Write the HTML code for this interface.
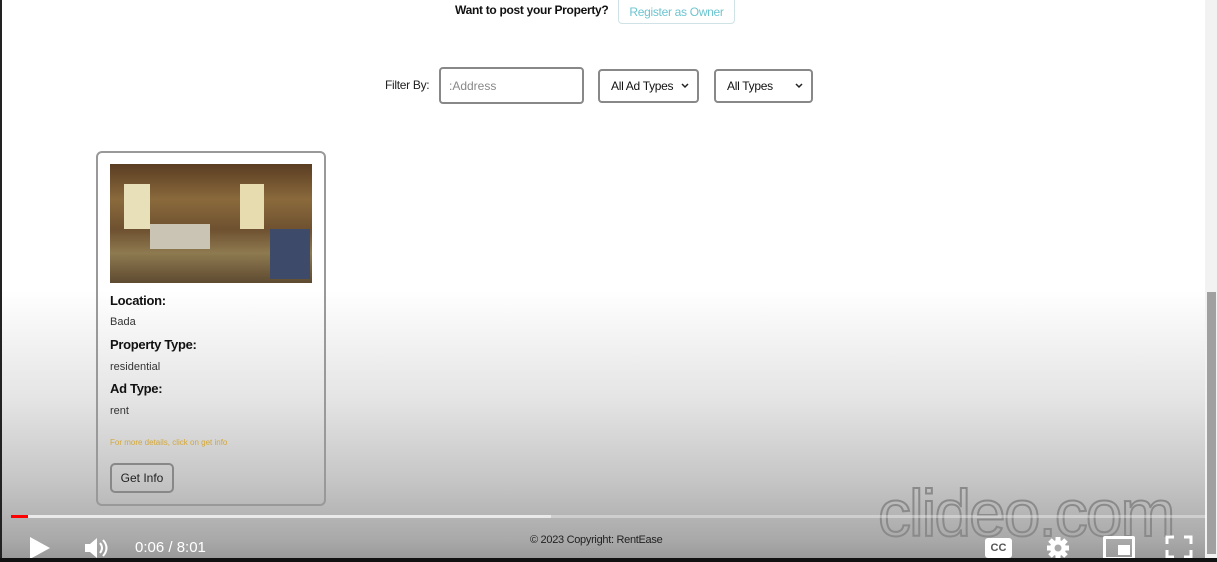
<!DOCTYPE html>
<html><head><meta charset="utf-8"><style>
*{margin:0;padding:0;box-sizing:border-box}
body{width:1217px;height:562px;overflow:hidden;position:relative;font-family:"Liberation Sans",sans-serif;background:linear-gradient(#fff 0,#fff 290px,#e4e4e4 400px,#c6c6c6 480px,#a9a9a9 540px,#9a9a9a 558px);}
.a{position:absolute}
.leftline{left:0;top:0;width:2px;height:558px;background:#222}
.bot{left:0;top:558px;width:1217px;height:4px;background:#111}
.sb{left:1205px;top:0;width:12px;height:558px;background:#f2f2f2}
.thumb{left:1207px;top:292px;width:9px;height:262px;background:#a0a0a0}
.box{border:2px solid #888;border-radius:4px;background:#fff}
.sel{display:flex;align-items:center;justify-content:space-between;padding:0 8px 0 11px;font-size:12px;color:#111;letter-spacing:-0.3px}
.lbl{font-weight:bold;font-size:13px;color:#111;letter-spacing:-0.3px}
.val{font-size:11px;color:#333}
</style></head><body>
<div class="a leftline"></div>
<div class="a sb"></div><div class="a thumb"></div>
<div class="a" style="left:455px;top:3px;font-size:12px;font-weight:bold;color:#111;letter-spacing:-0.3px">Want to post your Property?</div>
<div class="a" style="left:618px;top:-4px;width:117px;height:28px;border:1px solid #cfe3e6;border-radius:4px;color:#6cc5cf;font-size:12px;text-align:center;line-height:30px;background:#fff;letter-spacing:-0.3px">Register as Owner</div>
<div class="a" style="left:385px;top:78px;font-size:12px;color:#222;letter-spacing:-0.3px">Filter By:</div>
<div class="a box" style="left:439px;top:67px;width:145px;height:37px;font-size:12px;color:#888;padding:10px 8px">:Address</div>
<div class="a box sel" style="left:598px;top:69px;width:101px;height:34px"><span>All Ad Types</span><svg width="8" height="6"><path d="M1 1l3 3 3-3" stroke="#222" stroke-width="1.5" fill="none"/></svg></div>
<div class="a box sel" style="left:714px;top:69px;width:99px;height:34px"><span>All Types</span><svg width="8" height="6"><path d="M1 1l3 3 3-3" stroke="#222" stroke-width="1.5" fill="none"/></svg></div>
<div class="a" style="left:96px;top:151px;width:230px;height:355px;border:2px solid #999;border-radius:6px"></div>
<div class="a" style="left:110px;top:164px;width:202px;height:119px;background:linear-gradient(180deg,#5a3d22 0,#8a6a3c 30%,#6e5130 55%,#8e7a50 75%,#5e4a30 100%)">
 <div class="a" style="left:14px;top:20px;width:26px;height:45px;background:#e8e0b8"></div>
 <div class="a" style="left:130px;top:20px;width:24px;height:45px;background:#e6dcb0"></div>
 <div class="a" style="left:40px;top:60px;width:60px;height:25px;background:#c9c4b4"></div>
 <div class="a" style="left:160px;top:65px;width:40px;height:50px;background:#3d4a6a"></div>
</div>
<div class="a lbl" style="left:110px;top:293px">Location:</div>
<div class="a val" style="left:110px;top:316px">Bada</div>
<div class="a lbl" style="left:110px;top:337px">Property Type:</div>
<div class="a val" style="left:110px;top:361px">residential</div>
<div class="a lbl" style="left:110px;top:381px">Ad Type:</div>
<div class="a val" style="left:110px;top:405px">rent</div>
<div class="a" style="left:110px;top:438px;font-size:8px;color:#d4a838">For more details, click on get info</div>
<div class="a" style="left:110px;top:463px;width:64px;height:30px;border:2px solid #888;border-radius:5px;font-size:12px;color:#222;text-align:center;line-height:26px">Get Info</div>
<svg class="a" style="left:870px;top:470px" width="320" height="80"><text x="8" y="66" font-family="Liberation Sans,sans-serif" font-size="66" fill="none" stroke="#8a8a8a" stroke-width="2" letter-spacing="-2">clideo.com</text></svg>
<div class="a" style="left:11px;top:515px;width:1195px;height:3px;background:rgba(255,255,255,.35)"></div>
<div class="a" style="left:11px;top:515px;width:540px;height:3px;background:rgba(240,240,240,.8)"></div>
<div class="a" style="left:11px;top:515px;width:17px;height:3px;background:#f00"></div>
<div class="a" style="left:530px;top:534px;font-size:11px;color:#222;letter-spacing:-0.3px">© 2023 Copyright: RentEase</div>
<svg class="a" style="left:30px;top:537px" width="22" height="22"><path d="M0 0L20 11L0 22Z" fill="#fff"/></svg>
<svg class="a" style="left:84px;top:537px" width="26" height="22"><path d="M1 7h5l7-6v20l-7-6H1Z" fill="#fff"/><path d="M16 6q4 5 0 10M19 3q7 8 0 16" stroke="#fff" stroke-width="2" fill="none"/></svg>
<div class="a" style="left:135px;top:539px;font-size:15px;color:#fff">0:06 / 8:01</div>
<div class="a" style="left:985px;top:538px;width:27px;height:20px;background:#fff;border-radius:3px;font-size:11px;font-weight:bold;color:#555;text-align:center;line-height:20px">CC</div>
<svg class="a" style="left:1045px;top:536px" width="26" height="24"><circle cx="13" cy="12" r="8" fill="#fff"/><g stroke="#fff" stroke-width="5"><path d="M13 1v22M2 12h22M5 4l16 16M21 4L5 20"/></g><circle cx="13" cy="12" r="3.5" fill="#aaa"/></svg>
<div class="a" style="left:1103px;top:536px;width:32px;height:24px;border:3px solid #fff;border-radius:2px"><div class="a" style="left:12px;top:6px;width:12px;height:10px;background:#fff"></div></div>
<svg class="a" style="left:1165px;top:535px" width="28" height="24"><path d="M2 9V2h7M19 2h7v7M26 15v7h-7M9 22H2v-7" stroke="#fff" stroke-width="3" fill="none"/></svg>
<div class="a bot"></div>
</body></html>
